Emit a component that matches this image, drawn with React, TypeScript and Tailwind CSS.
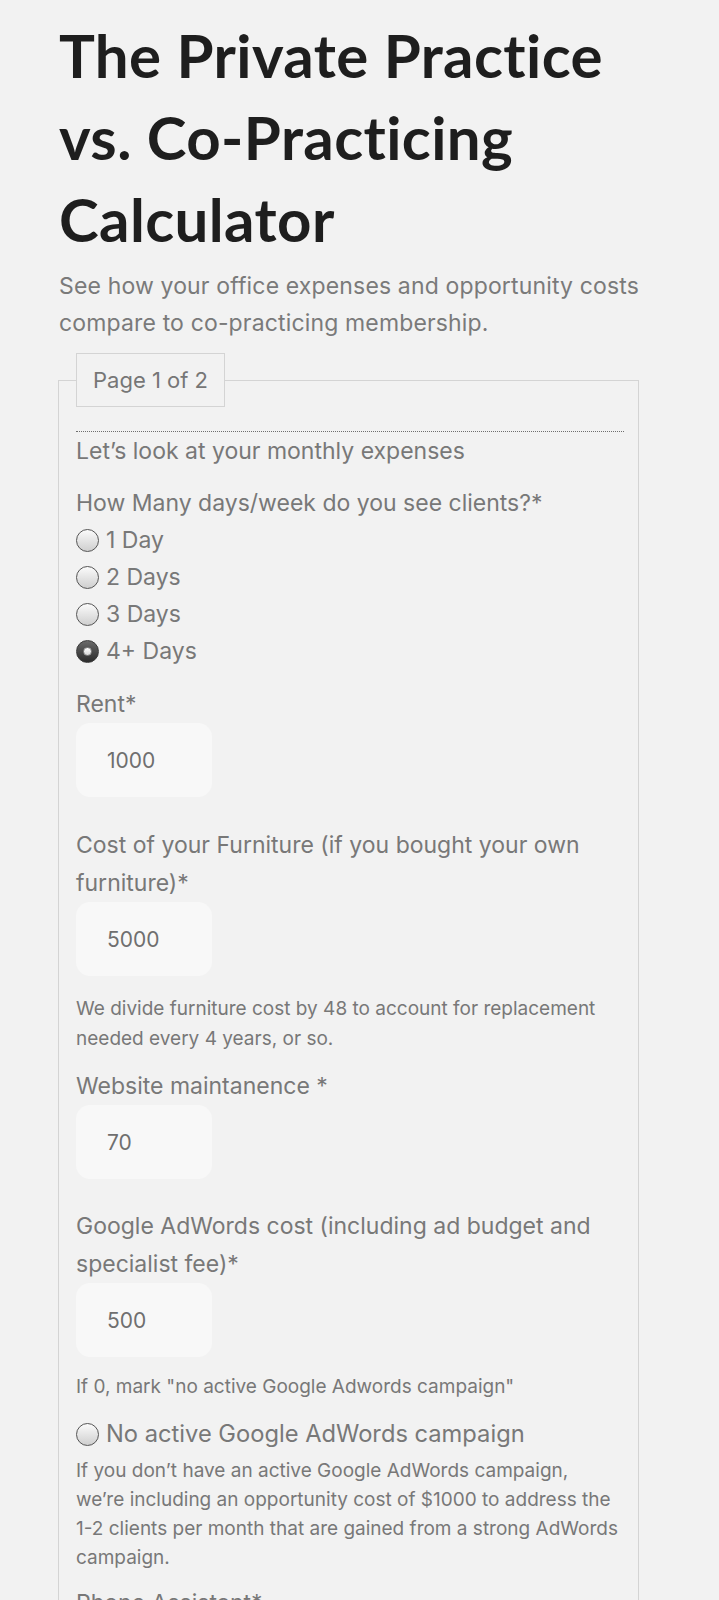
import React from 'react';

const Radio: React.FC<{ checked?: boolean }> = ({ checked }) =>
  checked ? (
    <span className="flex h-[23px] w-[23px] shrink-0 items-center justify-center rounded-full border-[1.5px] border-[#3a3a3a] bg-linear-to-b from-[#6a6a6a] to-[#2c2c2c]">
      <span className="h-[9px] w-[9px] rounded-full border border-[#888] bg-linear-to-b from-[#ffffff] to-[#d6d6d6]" />
    </span>
  ) : (
    <span className="h-[23px] w-[23px] shrink-0 rounded-full border-[1.5px] border-[#555] bg-linear-to-b from-[#fbfbfb] to-[#cfcfcf]" />
  );

const NumberInput: React.FC<{ value: string }> = ({ value }) => (
  <input
    type="text"
    readOnly
    defaultValue={value}
    className="block h-[74px] w-[136px] rounded-[14px] bg-[#f8f8f8] pl-[31px] text-[21px] text-[#6f6f6f] outline-none"
  />
);

const Label: React.FC<{ children: React.ReactNode; className?: string }> = ({ children, className = '' }) => (
  <p className={`text-[23px] leading-[38px] ${className}`}>{children}</p>
);

const Help: React.FC<{ children: React.ReactNode; className?: string }> = ({ children, className = '' }) => (
  <p className={`text-[19px] leading-[30px] ${className}`}>{children}</p>
);

const days = ['1 Day', '2 Days', '3 Days', '4+ Days'];

export default function App() {
  return (
    <div className="min-h-screen bg-[#f2f2f2] font-['Inter',sans-serif]">
      <div className="pl-[58px] pr-[80px] pt-[14px]">
        <h1 className="pl-px font-['Lato',sans-serif] text-[60px] font-bold leading-[82px] tracking-[0.4px] text-[#1e1e1e]">
          The Private Practice vs. Co-Practicing Calculator
        </h1>
        <p className="mt-[8px] pl-px text-[23px] leading-[37px] tracking-[0.15px] text-[#7a7a7a]">
          See how your office expenses and opportunity costs compare to co-practicing membership.
        </p>

        <fieldset className="mt-[11px] border border-[#d4d4d4] pb-10 pl-[17px] pr-[12px] pt-6 text-[#787878]">
          <legend className="h-[54px] border border-[#d4d4d4] px-4 text-[22px] leading-[52px] text-[#767676]">
            Page 1 of 2
          </legend>

          <div className="mr-[2px] border-t border-dotted border-[#6e6e6e]" />
          <Label>Let’s look at your monthly expenses</Label>

          <Label className="mt-[14px]">How Many days/week do you see clients?*</Label>
          <div className="flex flex-col">
            {days.map((d, i) => (
              <label key={d} className="flex h-[37px] items-center gap-[7px] text-[23px]">
                <Radio checked={i === 3} />
                <span>{d}</span>
              </label>
            ))}
          </div>

          <Label className="mt-[15px]">Rent*</Label>
          <NumberInput value="1000" />

          <Label className="mt-[29px]">Cost of your Furniture (if you bought your own furniture)*</Label>
          <NumberInput value="5000" />
          <Help className="mt-[18px]">
            We divide furniture cost by 48 to account for replacement needed every 4 years, or so.
          </Help>

          <Label className="mt-[13px]">Website maintanence *</Label>
          <NumberInput value="70" />

          <Label className="mt-[28px]">Google AdWords cost (including ad budget and specialist fee)*</Label>
          <NumberInput value="500" />
          <Help className="mt-[15px]">If 0, mark "no active Google Adwords campaign"</Help>

          <label className="mt-[14px] flex h-[36px] items-center gap-[7px] text-[23.7px]">
            <Radio />
            <span>No active Google AdWords campaign</span>
          </label>
          <p className="mt-[4px] text-[19px] leading-[29px]">
            If you don’t have an active Google AdWords campaign,
            <br />
            we’re including an opportunity cost of $1000 to address the 1-2 clients per month that are gained from a
            strong AdWords campaign.
          </p>

          <Label className="mt-[12px]">Phone Assistant*</Label>
          <NumberInput value="" />
        </fieldset>
      </div>
    </div>
  );
}
